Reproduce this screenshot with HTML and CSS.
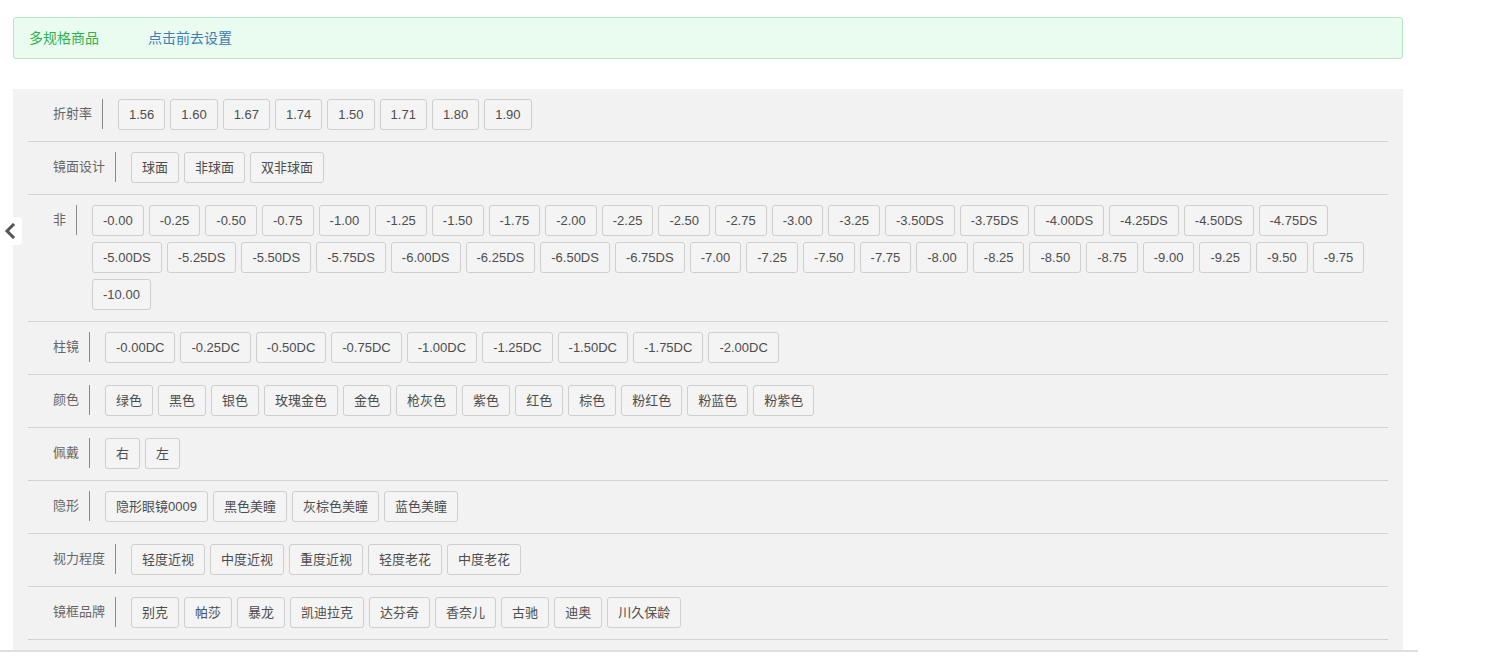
FILE: index.html
```html
<!DOCTYPE html>
<html lang="zh-CN">
<head>
<meta charset="utf-8">
<title>多规格商品</title>
<link rel="stylesheet" href="styles.css">
</head>
<body>
<div class="page">
  <div class="alert">
    <span class="alert-title">多规格商品</span>
    <a class="alert-link">点击前去设置</a>
  </div>

  <div class="panel">
    <div class="row">
      <div class="label">折射率</div>
      <div class="opts">
        <span class="opt">1.56</span><span class="opt">1.60</span><span class="opt">1.67</span><span class="opt">1.74</span><span class="opt">1.50</span><span class="opt">1.71</span><span class="opt">1.80</span><span class="opt">1.90</span>
      </div>
    </div>
    <div class="row">
      <div class="label">镜面设计</div>
      <div class="opts">
        <span class="opt">球面</span><span class="opt">非球面</span><span class="opt">双非球面</span>
      </div>
    </div>
    <div class="row">
      <div class="label">非</div>
      <div class="opts">
        <span class="opt">-0.00</span><span class="opt">-0.25</span><span class="opt">-0.50</span><span class="opt">-0.75</span><span class="opt">-1.00</span><span class="opt">-1.25</span><span class="opt">-1.50</span><span class="opt">-1.75</span><span class="opt">-2.00</span><span class="opt">-2.25</span><span class="opt">-2.50</span><span class="opt">-2.75</span><span class="opt">-3.00</span><span class="opt">-3.25</span><span class="opt">-3.50DS</span><span class="opt">-3.75DS</span><span class="opt">-4.00DS</span><span class="opt">-4.25DS</span><span class="opt">-4.50DS</span><span class="opt">-4.75DS</span>
        <span class="opt">-5.00DS</span><span class="opt">-5.25DS</span><span class="opt">-5.50DS</span><span class="opt">-5.75DS</span><span class="opt">-6.00DS</span><span class="opt">-6.25DS</span><span class="opt">-6.50DS</span><span class="opt">-6.75DS</span><span class="opt">-7.00</span><span class="opt">-7.25</span><span class="opt">-7.50</span><span class="opt">-7.75</span><span class="opt">-8.00</span><span class="opt">-8.25</span><span class="opt">-8.50</span><span class="opt">-8.75</span><span class="opt">-9.00</span><span class="opt">-9.25</span><span class="opt">-9.50</span><span class="opt">-9.75</span>
        <span class="opt">-10.00</span>
      </div>
    </div>
    <div class="row">
      <div class="label">柱镜</div>
      <div class="opts">
        <span class="opt">-0.00DC</span><span class="opt">-0.25DC</span><span class="opt">-0.50DC</span><span class="opt">-0.75DC</span><span class="opt">-1.00DC</span><span class="opt">-1.25DC</span><span class="opt">-1.50DC</span><span class="opt">-1.75DC</span><span class="opt">-2.00DC</span>
      </div>
    </div>
    <div class="row">
      <div class="label">颜色</div>
      <div class="opts">
        <span class="opt">绿色</span><span class="opt">黑色</span><span class="opt">银色</span><span class="opt">玫瑰金色</span><span class="opt">金色</span><span class="opt">枪灰色</span><span class="opt">紫色</span><span class="opt">红色</span><span class="opt">棕色</span><span class="opt">粉红色</span><span class="opt">粉蓝色</span><span class="opt">粉紫色</span>
      </div>
    </div>
    <div class="row">
      <div class="label">佩戴</div>
      <div class="opts">
        <span class="opt">右</span><span class="opt">左</span>
      </div>
    </div>
    <div class="row">
      <div class="label">隐形</div>
      <div class="opts">
        <span class="opt">隐形眼镜0009</span><span class="opt">黑色美瞳</span><span class="opt">灰棕色美瞳</span><span class="opt">蓝色美瞳</span>
      </div>
    </div>
    <div class="row">
      <div class="label">视力程度</div>
      <div class="opts">
        <span class="opt">轻度近视</span><span class="opt">中度近视</span><span class="opt">重度近视</span><span class="opt">轻度老花</span><span class="opt">中度老花</span>
      </div>
    </div>
    <div class="row">
      <div class="label">镜框品牌</div>
      <div class="opts">
        <span class="opt">别克</span><span class="opt">帕莎</span><span class="opt">暴龙</span><span class="opt">凯迪拉克</span><span class="opt">达芬奇</span><span class="opt">香奈儿</span><span class="opt">古驰</span><span class="opt">迪奥</span><span class="opt">川久保龄</span>
      </div>
    </div>
  </div>
</div>

<div class="side-toggle">
  <svg width="12" height="16" viewBox="0 0 12 16" aria-hidden="true"><path d="M9 2 L3 8 L9 14" fill="none" stroke="#555" stroke-width="3" stroke-linecap="square"/></svg>
</div>
<div class="bottom-bar"></div>
</body>
</html>
```

FILE: styles.css
```css
html, body {
  margin: 0;
  padding: 0;
  background: #fff;
}

body {
  font-family: "Liberation Sans", "Noto Sans CJK SC", sans-serif;
  font-size: 13px;
  color: #666;
}

.page {
  width: 1390px;
  padding: 17px 0 0 13px;
}

.alert {
  height: 42px;
  box-sizing: border-box;
  border: 1px solid #b5e6c6;
  border-radius: 3px;
  background: #eafbf0;
  padding: 0 15px;
  line-height: 40px;
  font-size: 14px;
  display: flex;
}

.alert-title {
  color: #2fb24e;
  width: 119px;
}

.alert-link {
  color: #3a7cb6;
  cursor: pointer;
}

.panel {
  margin-top: 30px;
  background: #f2f2f2;
  padding: 0 15px 11px;
}

.row {
  display: flex;
  align-items: flex-start;
  padding: 10px 0 11px 25px;
  border-bottom: 1px solid #d3d3d3;
}

.label {
  flex: none;
  height: 30px;
  line-height: 30px;
  padding-right: 10px;
  border-right: 1px solid #8a8a8a;
  margin-right: 15px;
  color: #666;
  white-space: nowrap;
}

.opts {
  flex: 1;
  display: flex;
  flex-wrap: wrap;
  gap: 6px 5px;
}

.opt {
  height: 31px;
  box-sizing: border-box;
  border: 1px solid #cfcfcf;
  border-radius: 3px;
  padding: 0 10px;
  line-height: 29px;
  color: #4d4d4d;
  background: #f4f4f4;
  white-space: nowrap;
}

.side-toggle {
  position: fixed;
  left: 0;
  top: 217px;
  width: 22px;
  height: 28px;
  background: #fff;
  border-radius: 0 4px 4px 0;
  display: flex;
  align-items: center;
  justify-content: center;
  padding-right: 2px;
  box-sizing: border-box;
}

.bottom-bar {
  position: fixed;
  left: 0;
  top: 650px;
  width: 1418px;
  height: 8px;
  background: #fff;
  border-top: 2px solid #dedede;
  box-sizing: border-box;
}
```
